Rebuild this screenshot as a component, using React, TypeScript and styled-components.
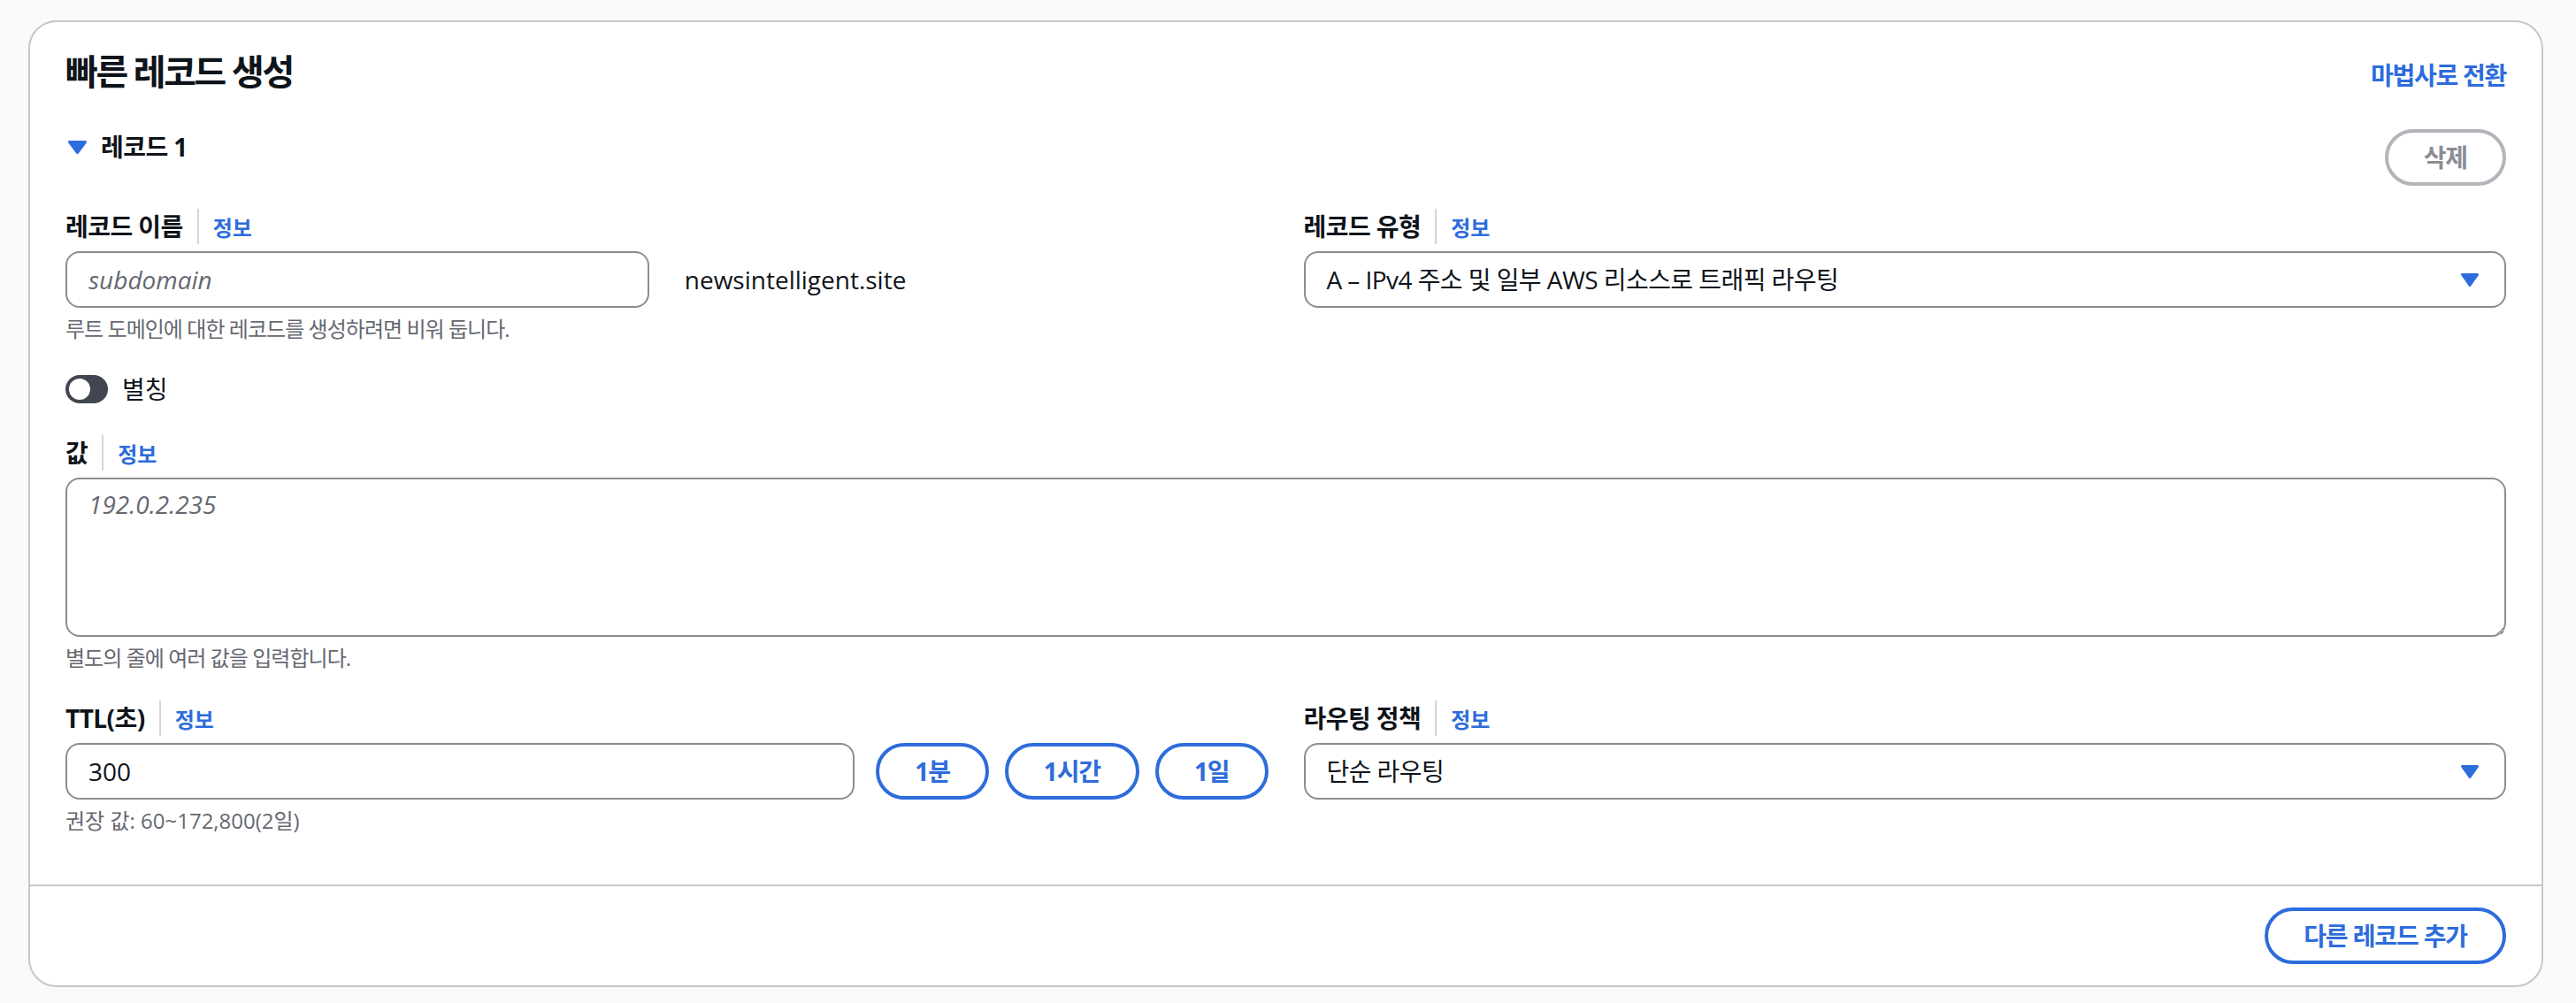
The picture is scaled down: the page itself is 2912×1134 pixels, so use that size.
import styled, { createGlobalStyle } from 'styled-components';

const BLUE = '#2d6cdc';

const GlobalStyle = createGlobalStyle`
  * { box-sizing: border-box; }
  html, body {
    margin: 0;
    padding: 0;
    background: #fafafa;
  }
  body {
    font-family: "Open Sans", "Noto Sans CJK KR", sans-serif;
    font-feature-settings: "palt";
    color: #0f141a;
  }
`;

const Caret = ({ w = 21, h = 15 }: { w?: number; h?: number }) => (
  <svg width={w} height={h} viewBox={`0 0 ${w} ${h}`}>
    <path
      d={`M1.5 1.5 H${w - 1.5} L${w / 2} ${h - 1.5} Z`}
      fill={BLUE}
      stroke={BLUE}
      strokeWidth="3"
      strokeLinejoin="round"
    />
  </svg>
);

export default function App() {
  return (
    <Page>
      <GlobalStyle />
      <Card>
        <CardHeader>
          <Title>빠른 레코드 생성</Title>
          <HeaderLink>마법사로 전환</HeaderLink>
        </CardHeader>

        <CardBody>
          <SectionHeader>
            <ExpandTitle>
              <Caret />
              <span>레코드 1</span>
            </ExpandTitle>
            <PillButton $disabled>삭제</PillButton>
          </SectionHeader>

          <Fields>
            <TwoCol>
              <Field>
                <FieldLabel>
                  <LabelText>레코드 이름</LabelText>
                  <Divider />
                  <InfoLink>정보</InfoLink>
                </FieldLabel>
                <NameRow>
                  <TextInput placeholder='subdomain' />
                  <DomainText>newsintelligent.site</DomainText>
                </NameRow>
                <Hint $korean>루트 도메인에 대한 레코드를 생성하려면 비워 둡니다.</Hint>
              </Field>
              <Field>
                <FieldLabel>
                  <LabelText>레코드 유형</LabelText>
                  <Divider />
                  <InfoLink>정보</InfoLink>
                </FieldLabel>
                <SelectBox>
                  <span>A – IPv4 주소 및 일부 AWS 리소스로 트래픽 라우팅</span>
                  <Caret w={20} h={15} />
                </SelectBox>
              </Field>
            </TwoCol>

            <ToggleRow>
              <Toggle>
                <Knob />
              </Toggle>
              <span>별칭</span>
            </ToggleRow>

            <Field>
              <FieldLabel>
                <LabelText>값</LabelText>
                <Divider />
                <InfoLink>정보</InfoLink>
              </FieldLabel>
              <TextArea placeholder='192.0.2.235' />
              <Hint $korean>별도의 줄에 여러 값을 입력합니다.</Hint>
            </Field>

            <TwoCol>
              <Field>
                <FieldLabel>
                  <LabelText>TTL(초)</LabelText>
                  <Divider />
                  <InfoLink>정보</InfoLink>
                </FieldLabel>
                <TtlRow>
                  <TextInput defaultValue='300' />
                  <ButtonGroup>
                    <PillButton>1분</PillButton>
                    <PillButton>1시간</PillButton>
                    <PillButton>1일</PillButton>
                  </ButtonGroup>
                </TtlRow>
                <Hint>권장 값: 60~172,800(2일)</Hint>
              </Field>
              <Field>
                <FieldLabel>
                  <LabelText>라우팅 정책</LabelText>
                  <Divider />
                  <InfoLink>정보</InfoLink>
                </FieldLabel>
                <SelectBox>
                  <span>단순 라우팅</span>
                  <Caret w={20} h={15} />
                </SelectBox>
              </Field>
            </TwoCol>
          </Fields>
        </CardBody>

        <CardFooter>
          <PillButton>다른 레코드 추가</PillButton>
        </CardFooter>
      </Card>
    </Page>
  );
}

const Page = styled.div`
  padding: 23px 37px 0 32px;
`;

const Card = styled.section`
  background: #ffffff;
  border: 2px solid #c6c6cd;
  border-radius: 32px;
  display: flex;
  flex-direction: column;
  overflow: hidden;
`;

const CardHeader = styled.div`
  display: flex;
  justify-content: space-between;
  align-items: baseline;
  padding: 32px 40px 0;
`;

const Title = styled.h2`
  margin: 0;
  font-size: 40px;
  line-height: 48px;
  font-weight: 700;
  letter-spacing: -0.06em;
`;

const HeaderLink = styled.a`
  font-size: 28px;
  line-height: 40px;
  font-weight: 700;
  letter-spacing: -0.045em;
  color: ${BLUE};
  cursor: pointer;
`;

const CardBody = styled.div`
  padding: 41px 40px 56px;
`;

const SectionHeader = styled.div`
  display: flex;
  justify-content: space-between;
  align-items: flex-start;
`;

const ExpandTitle = styled.div`
  display: flex;
  align-items: center;
  gap: 16px;
  padding-left: 3px;
  font-size: 28px;
  line-height: 40px;
  font-weight: 700;
  letter-spacing: -0.02em;
`;

const Fields = styled.div`
  display: flex;
  flex-direction: column;
  gap: 32px;
  margin-top: 26px;
`;

const TwoCol = styled.div`
  display: grid;
  grid-template-columns: 1fr 1fr;
  column-gap: 40px;
`;

const Field = styled.div`
  display: flex;
  flex-direction: column;
  min-width: 0;
`;

const FieldLabel = styled.div`
  display: flex;
  align-items: baseline;
  height: 40px;
  margin-bottom: 8px;
`;

const LabelText = styled.span`
  font-size: 28px;
  line-height: 40px;
  font-weight: 700;
  letter-spacing: -0.02em;
`;

const Divider = styled.span`
  align-self: stretch;
  width: 2px;
  margin: 0 16px;
  background: #d5d5da;
`;

const InfoLink = styled.a`
  font-size: 24px;
  line-height: 40px;
  font-weight: 700;
  color: ${BLUE};
  cursor: pointer;
`;

const NameRow = styled.div`
  display: grid;
  grid-template-columns: 1fr 1fr;
  column-gap: 40px;
  align-items: center;
`;

const TextInput = styled.input`
  width: 100%;
  min-width: 0;
  height: 64px;
  padding: 0 24px;
  border: 2px solid #8c8c94;
  border-radius: 16px;
  background: #ffffff;
  font-family: inherit;
  font-size: 28px;
  color: #0f141a;
  outline: none;

  &::placeholder {
    color: #656871;
    font-style: italic;
  }
`;

const DomainText = styled.span`
  font-size: 28px;
  line-height: 40px;
`;

const Hint = styled.div<{ $korean?: boolean }>`
  margin-top: 8px;
  font-size: 24px;
  line-height: 32px;
  letter-spacing: ${(p) => (p.$korean ? '-0.04em' : '0')};
  color: #656871;
`;

const SelectBox = styled.div`
  display: flex;
  align-items: center;
  justify-content: space-between;
  height: 64px;
  padding: 0 29px 0 24px;
  border: 2px solid #8c8c94;
  border-radius: 16px;
  font-size: 28px;
  line-height: 40px;
  letter-spacing: -0.02em;
  cursor: pointer;
`;

const ToggleRow = styled.label`
  display: flex;
  align-items: center;
  gap: 16px;
  font-size: 28px;
  line-height: 40px;
`;

const Toggle = styled.span`
  position: relative;
  display: inline-block;
  width: 48px;
  height: 32px;
  border-radius: 16px;
  background: #424650;
`;

const Knob = styled.span`
  position: absolute;
  top: 4px;
  left: 4px;
  width: 24px;
  height: 24px;
  border-radius: 50%;
  background: #ffffff;
`;

const TextArea = styled.textarea`
  display: block;
  width: 100%;
  height: 180px;
  padding: 8px 24px;
  border: 2px solid #8c8c94;
  border-radius: 16px;
  font-family: inherit;
  font-size: 28px;
  line-height: 40px;
  color: #0f141a;
  resize: vertical;
  outline: none;

  &::placeholder {
    color: #656871;
    font-style: italic;
  }
`;

const TtlRow = styled.div`
  display: flex;
  align-items: center;
  gap: 24px;
`;

const ButtonGroup = styled.div`
  display: flex;
  gap: 18px;
  flex-shrink: 0;
`;

const PillButton = styled.button<{ $disabled?: boolean }>`
  height: 64px;
  padding: 0 40px;
  border: 4px solid ${(p) => (p.$disabled ? '#b4b4bb' : BLUE)};
  border-radius: 40px;
  background: #ffffff;
  color: ${(p) => (p.$disabled ? '#8c8c94' : BLUE)};
  font-family: inherit;
  font-size: 28px;
  font-weight: 700;
  line-height: 40px;
  letter-spacing: -0.04em;
  white-space: nowrap;
  cursor: ${(p) => (p.$disabled ? 'default' : 'pointer')};
`;

const CardFooter = styled.div`
  display: flex;
  justify-content: flex-end;
  padding: 24px 40px;
  border-top: 2px solid #c6c6cd;
`;
